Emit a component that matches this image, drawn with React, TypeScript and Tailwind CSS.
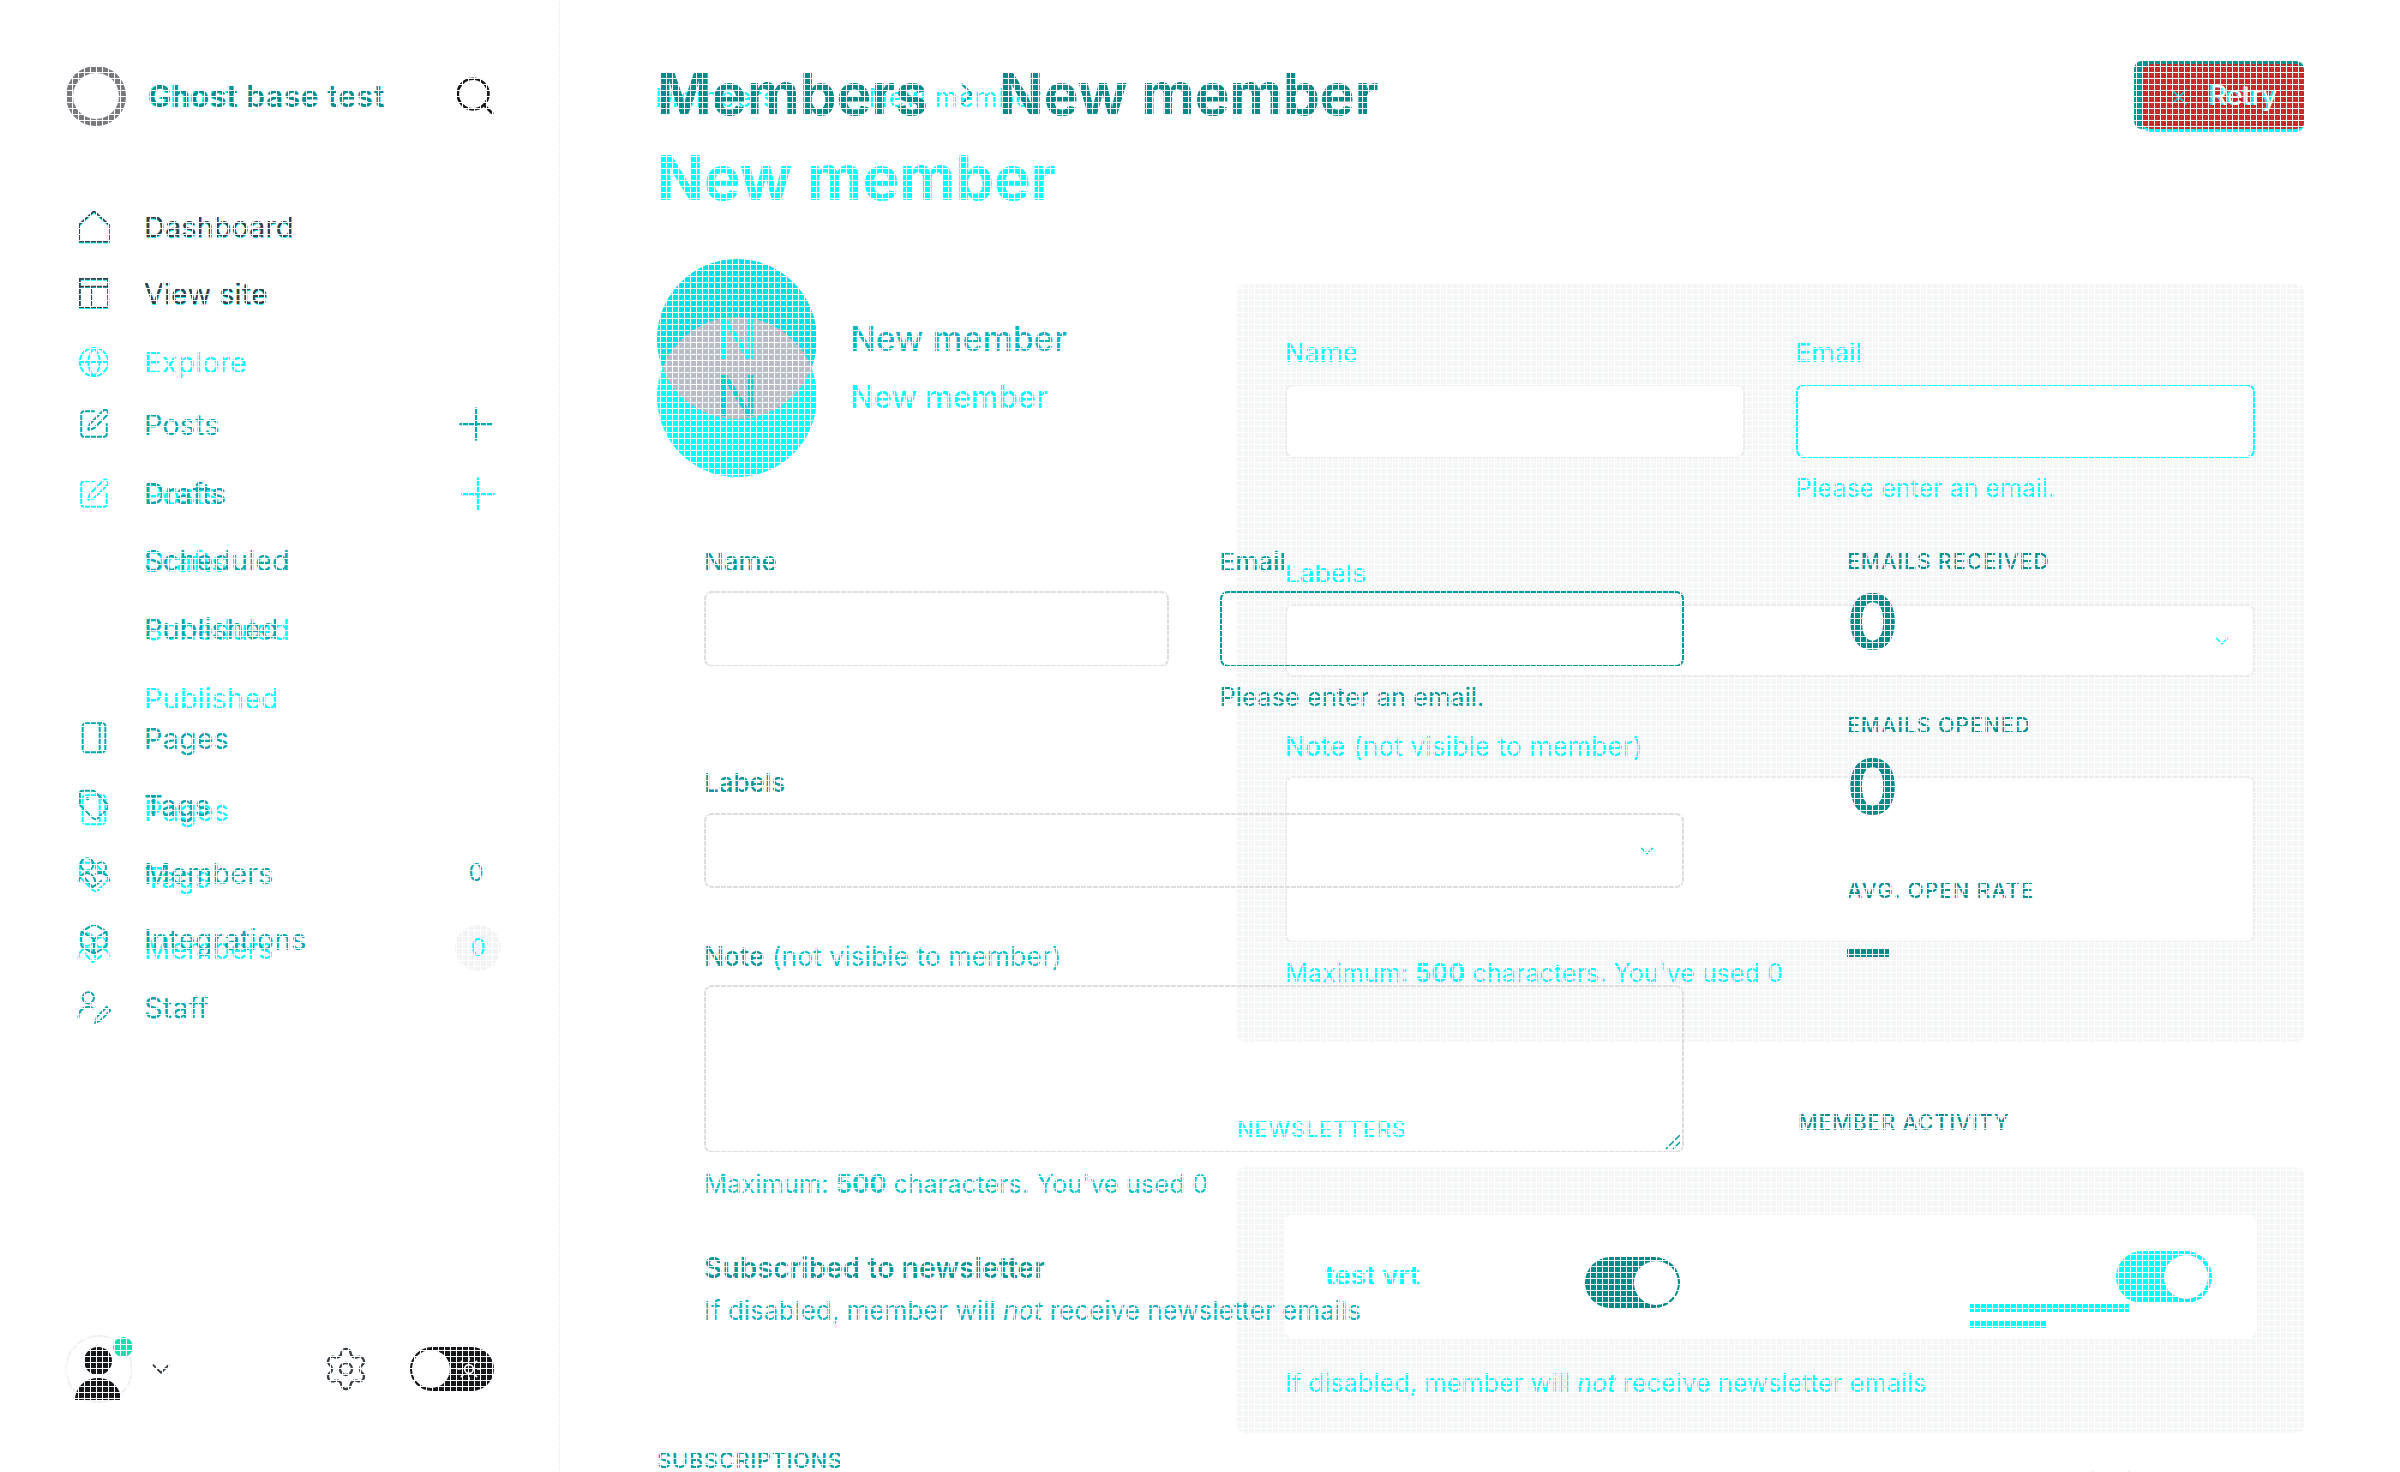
import { ReactNode } from "react";
import { Box, ChevronDown, ChevronRight, Globe, Plus, Search, Settings, SquarePen, Sun, Tag, X } from "lucide-react";

const iconClass = "w-[34px] h-[34px]";

const HomeIcon = () => (
  <svg viewBox="0 0 24 24" fill="none" stroke="currentColor" strokeWidth="1.3" className={iconClass}>
    <path d="M1.5 11 12 1.5 22.5 11v12h-21z" />
  </svg>
);

const SiteIcon = () => (
  <svg viewBox="0 0 24 24" fill="none" stroke="currentColor" strokeWidth="1.3" className={iconClass}>
    <path d="M2 2h20v20H2zM2 7.5h20M10 7.5V22" />
  </svg>
);

const PageIcon = () => (
  <svg viewBox="0 0 24 24" fill="none" stroke="currentColor" strokeWidth="1.4" className={iconClass}>
    <path d="M4 3.5c0-1 1-2 2-2h12c1 0 2 1 2 2V20c0 1-1 2-2 2H6c-1 0-2-1-2-2zM16 1.5V22" />
  </svg>
);

const MembersIcon = () => (
  <svg viewBox="0 0 24 24" fill="none" stroke="currentColor" strokeWidth="1.4" className={iconClass}>
    <circle cx="7" cy="6" r="4.5" />
    <circle cx="17" cy="8" r="3.5" />
    <path d="M1 19c0-4 3-7 6-7s6 3 6 7M13 13c3-2 9-1 10 5M5 15l6 7 7-5" />
  </svg>
);

const StaffIcon = () => (
  <svg viewBox="0 0 24 24" fill="none" stroke="currentColor" strokeWidth="1.4" className={iconClass}>
    <circle cx="8" cy="5.5" r="4" />
    <path d="M1 20c0-5 3-8 7-8 2 0 3 .5 4 1.500M13 23l1-4 7-7 2.500 2.500-7 7z" />
  </svg>
);

const NavRow = ({ icon, label, right, className }: { icon?: ReactNode; label: string; right?: ReactNode; className?: string }) => (
  <div className={`flex items-center h-[68px] ${className ?? ""}`}>
    <span className="w-[67px] shrink-0 flex items-center">{icon}</span>
    <span className="text-[29px] leading-none">{label}</span>
    {right && <span className="ml-auto w-[36px] flex justify-center text-[24px]">{right}</span>}
  </div>
);

const Field = ({ className }: { className?: string }) => (
  <div className={`rounded-lg border-2 ${className ?? ""}`} />
);

const NewLayer = () => (
  <div className="flex text-[#00ffff]">
    <aside className="w-[560px] h-[1472px] shrink-0 pl-[77px] pr-[64px] pt-[66px] flex flex-col">
      <div className="h-[60px] flex items-center pl-[70px] text-[30px] font-semibold tracking-[0.6px]">Ghost</div>
      <nav className="mt-[67px]">
        <NavRow icon={<HomeIcon />} label="Dashboard" />
        <NavRow icon={<SiteIcon />} label="View site" className="-mt-[1px]" />
        <NavRow icon={<Globe className={iconClass} strokeWidth={1.3} />} label="Explore" />
        <NavRow icon={<SquarePen className={iconClass} strokeWidth={1.4} />} label="Posts" right={<Plus className="w-[54px] h-[54px] shrink-0" strokeWidth={1} />} className="mt-[64px]" />
        <NavRow label="Drafts" className="-mt-[1px]" />
        <NavRow label="Scheduled" />
        <NavRow label="Published" className="mt-[1px]" />
        <NavRow icon={<PageIcon />} label="Pages" className="mt-[44px]" />
        <NavRow icon={<Tag className={iconClass} strokeWidth={1.4} />} label="Tags" className="-mt-[1px]" />
        <NavRow
          icon={<MembersIcon />}
          label="Members"
          right={<span className="w-[46px] h-[46px] shrink-0 rounded-full bg-[#f1f3f4] flex items-center justify-center">0</span>}
          className="mt-[3px]"
        />
      </nav>
    </aside>
    <main className="flex-1 pl-[97px] pr-[96px] pt-[83px]">
      <div className="text-[26px] leading-[30px] tracking-[0.9px] flex items-center -ml-[2px]">Members<span className="ml-[91px]">New member</span></div>
      <h1 className="mt-[30px] text-[61.500px] leading-[70px] font-bold">New member</h1>
      <div className="mt-[71px] flex">
        <div className="w-[580px] shrink-0 pl-[193px] pt-[98px] text-[31px] leading-[30px] font-medium">New member</div>
        <div className="flex-1">
          <section className="h-[758px] rounded-lg bg-[#f5f6f6] pl-[48px] pr-[49px] pt-[56px] text-[26px] leading-[26px] font-medium">
            <div className="grid grid-cols-2 gap-x-[51px]">
              <div>
                <div>Name</div>
                <Field className="mt-[18px] h-[74px] bg-white border-[#ececec]" />
              </div>
              <div>
                <div>Email</div>
                <Field className="mt-[18px] h-[74px] bg-white border-[#00ffff]" />
                <div className="mt-[20px] text-[25px] leading-[20px] font-normal">Please enter an email.</div>
              </div>
            </div>
            <div className="mt-[63px]">Labels</div>
            <div className="mt-[17px] h-[73px] rounded-lg border-2 border-[#ececec] bg-white flex items-center justify-end pr-[20px]">
              <ChevronDown className="w-[22px] h-[22px]" strokeWidth={1.5} />
            </div>
            <div className="mt-[56px] font-normal text-[26.500px]"><span className="font-medium">Note</span> (not visible to member)</div>
            <Field className="mt-[17px] h-[167px] bg-white border-[#ececec]" />
            <div className="mt-[20px] text-[25.200px] leading-[20px] font-normal">Maximum: <b className="font-bold">500</b> characters. You've used 0</div>
          </section>
          <div className="mt-[77px] text-[21.800px] leading-[20px] font-medium tracking-[0.8px]">NEWSLETTERS</div>
          <section className="mt-[28px] h-[266px] rounded-lg bg-[#f5f6f6] pl-[48px] pr-[48px] pt-[48px]">
            <div className="relative h-[123px] rounded-lg bg-white flex items-center justify-between pl-[40px] pr-[44px]">
              <span className="text-[27px] font-bold">test vrt</span>
              <span className="w-[96px] h-[52px] rounded-full bg-[#00ffff] flex items-center justify-end pr-[4px]">
                <span className="w-[44px] h-[44px] rounded-full bg-white shadow-sm" />
              </span>
              <span className="absolute left-[685px] top-[89px] w-[159px] h-[8px] bg-[#00ffff]" />
              <span className="absolute left-[685px] top-[106px] w-[77px] h-[7px] bg-[#00ffff]" />
            </div>
            <div className="mt-[35px] text-[25.400px] leading-[20px]">If disabled, member will <i>not</i> receive newsletter emails</div>
          </section>
        </div>
      </div>
    </main>
  </div>
);

const BaseLayer = () => (
  <div className="absolute inset-0 flex text-[#00a8ac]">
    <aside className="w-[560px] h-[1472px] shrink-0 border-r-2 border-[#f0f0f0] pl-[77px] pr-[64px] pt-[66px] pb-[70px] flex flex-col">
      <div className="h-[60px] flex items-center">
        <div className="w-[60px] h-[60px] -ml-[11px] rounded-full border-[7px] border-[#77797c]" />
        <div className="ml-[23px] text-[30px] font-semibold tracking-[0.6px] text-[#008f8f]">Ghost base test</div>
        <Search className="ml-auto w-[46px] h-[46px] -mr-[4px] text-[#15171a]" strokeWidth={1.4} />
      </div>
      <nav className="mt-[66px]">
        <NavRow icon={<HomeIcon />} label="Dashboard" className="text-[#394047]" />
        <NavRow icon={<SiteIcon />} label="View site" className="-mt-[1px] text-[#394047]" />
        <NavRow
          icon={<SquarePen className={iconClass} strokeWidth={1.4} />}
          label="Posts"
          right={<Plus className="w-[54px] h-[54px] shrink-0" strokeWidth={1} />}
          className="mt-[63px]"
        />
        <NavRow label="Drafts" className="mt-[1px]" />
        <NavRow label="Scheduled" className="-mt-[1px]" />
        <NavRow label="Published" />
        <NavRow icon={<PageIcon />} label="Pages" className="mt-[42px]" />
        <NavRow icon={<Tag className={iconClass} strokeWidth={1.4} />} label="Tags" className="-mt-[1px]" />
        <NavRow icon={<MembersIcon />} label="Members" right={<span>0</span>} />
        <NavRow icon={<Box className={iconClass} strokeWidth={1.4} />} label="Integrations" className="-mt-[2px]" />
        <NavRow icon={<StaffIcon />} label="Staff" />
      </nav>
      <div className="mt-auto flex items-center h-[68px] -ml-[12px] translate-y-[1px] text-[#394047]">
        <div className="relative w-[68px] h-[68px] rounded-full border-2 border-[#eeeeee] overflow-visible">
          <span className="absolute left-[17px] top-[10px] w-[28px] h-[28px] rounded-full bg-[#15171a]" />
          <span className="absolute left-[8px] top-[41px] w-[46px] h-[22px] rounded-t-full rounded-b-[14px] bg-[#15171a]" />
          <span className="absolute -right-[2px] top-0 w-[20px] h-[20px] rounded-full bg-[#14dfb0]" />
        </div>
        <ChevronDown className="ml-[13px] w-[30px] h-[30px]" strokeWidth={1.5} />
        <Settings className="ml-auto mr-[40px] w-[48px] h-[48px]" strokeWidth={1.2} />
        <div className="w-[84px] h-[44px] rounded-full bg-[#15171a] flex items-center pl-[2px]">
          <span className="w-[38px] h-[38px] rounded-full bg-white" />
          <Sun className="ml-[6px] w-[26px] h-[26px] text-white" strokeWidth={1.5} />
        </div>
      </div>
    </aside>
    <main className="flex-1 pl-[97px] pr-[96px] pt-[61px]">
      <header className="flex justify-between h-[68px]">
        <div className="flex items-center text-[58.500px] leading-[68px] font-bold text-[#008b8b] -translate-y-[1px]">
          <span>Members</span>
          <ChevronRight className="ml-[20px] w-[38px] h-[38px] text-[#00a0a0]" strokeWidth={1.5} />
          <span className="ml-[13px]">New member</span>
        </div>
        <div className="relative w-[170px] h-[68px] rounded-lg bg-[#009393]">
          <div className="absolute left-[9px] top-[3px] right-0 -bottom-[3px] rounded-lg bg-[#c52b2b] border-b-[3px] border-[#00ffff] flex items-center pl-[22px] text-[27px] text-white">
            <X className="w-[28px] h-[28px] text-[#00d8d8]" strokeWidth={1.5} />
            <span className="ml-[17px] [text-shadow:-2px_0_#00e8e8]">Retry</span>
          </div>
        </div>
      </header>
      <div className="mt-[130px] flex">
        <div className="relative w-[160px] h-[218px] shrink-0">
          <div className="absolute left-0 top-[58px] w-[160px] h-[160px] rounded-full bg-[#00ffff]" />
          <div className="absolute left-0 top-0 w-[160px] h-[160px] rounded-full bg-[#00e0e8] overflow-hidden">
            <div className="absolute left-0 top-[58px] w-[160px] h-[160px] rounded-full bg-[#b8bcc6]" />
            <div className="absolute inset-x-0 top-[52px] text-center text-[56px] leading-[56px] text-[#00ffff]">N</div>
            <div className="absolute inset-x-0 top-[109px] text-center text-[56px] leading-[56px] text-[#00d0d8]">N</div>
          </div>
        </div>
        <div className="ml-[33px] mt-[66px] text-[34px] leading-[28px] font-medium text-[#00b8c0]">New member</div>
      </div>
      <div className="mt-[72px] flex">
        <div className="w-[980px] ml-[47px] shrink-0 text-[#009a9a]">
          <div className="grid grid-cols-2 gap-x-[51px] text-[26px] leading-[26px] font-medium">
            <div>
              <div>Name</div>
              <Field className="mt-[16px] h-[76px] border-[#dedede]" />
            </div>
            <div>
              <div>Email</div>
              <Field className="mt-[16px] h-[76px] border-[#009a9a]" />
              <div className="mt-[20px] text-[25.500px] leading-[20px] font-normal">Please enter an email.</div>
            </div>
          </div>
          <div className="mt-[63px] text-[26px] leading-[26px] font-medium">Labels</div>
          <div className="mt-[17px] h-[75px] rounded-lg border-2 border-[#dedede] flex items-center justify-end pr-[24px]">
            <ChevronDown className="w-[22px] h-[22px] text-[#00d0d0]" strokeWidth={1.5} />
          </div>
          <div className="mt-[55px] text-[26.500px] leading-[26px]">
            <span className="font-medium">Note</span> <span className="text-[#00c4c8]">(not visible to member)</span>
          </div>
          <div className="relative mt-[16px] h-[168px] rounded-lg border-2 border-[#dedede]">
            <svg viewBox="0 0 16 16" className="absolute right-[1px] bottom-[1px] w-[16px] h-[16px] stroke-[#009a9a]">
              <path d="M1 15 15 1M8 15l7-7" strokeWidth="1.5" />
            </svg>
          </div>
          <div className="mt-[21px] text-[25.500px] leading-[20px] text-[#00c8c8]">
            Maximum: <b className="font-bold">500</b> characters. You've used 0
          </div>
          <div className="mt-[60px] flex justify-between pr-[4px]">
            <div>
              <div className="text-[28.300px] leading-[28px] font-semibold">Subscribed to newsletter</div>
              <div className="mt-[19px] text-[26px] leading-[20px] text-[#00b8c0]">If disabled, member will <i>not</i> receive newsletter emails</div>
            </div>
            <span className="mt-[3px] w-[95px] h-[51px] rounded-full bg-[#008b8b] flex items-center justify-end pr-[2px]">
              <span className="w-[44px] h-[44px] rounded-full bg-white" />
            </span>
          </div>
          <div className="mt-[129px] -ml-[47px] text-[22px] leading-[20px] font-medium tracking-[0.6px] text-[#00a0a4]">SUBSCRIPTIONS</div>
        </div>
        <div className="ml-[163px] pt-[2px] text-[#009090]">
          <div className="text-[21.500px] leading-[20px] font-medium tracking-[0.8px]">EMAILS RECEIVED</div>
          <div className="mt-[10px] text-[76px] leading-[80px] font-bold text-[#008b8b]">0</div>
          <div className="mt-[54px] text-[21.500px] leading-[20px] font-medium tracking-[0.8px]">EMAILS OPENED</div>
          <div className="mt-[11px] text-[76px] leading-[80px] font-bold text-[#008b8b]">0</div>
          <div className="mt-[54px] text-[21.500px] leading-[20px] font-medium tracking-[0.8px]">AVG. OPEN RATE</div>
          <div className="mt-[49px] w-[42px] h-[8px] bg-[#008b8b]" />
          <div className="mt-[155px] -ml-[49px] text-[21.500px] leading-[20px] font-medium tracking-[0.8px]">MEMBER ACTIVITY</div>
          <div className="mt-[337px] ml-[80px] text-[30px] leading-[30px] text-[#00a8ac]">Add subscription</div>
        </div>
      </div>
    </main>
  </div>
);

export default function App() {
  return (
    <div className="relative w-[2400px] h-[1472px] overflow-hidden bg-white font-[Inter,sans-serif]">
      <NewLayer />
      <BaseLayer />
      <div className="absolute inset-0 pointer-events-none bg-[linear-gradient(to_right,#fff_1px,transparent_1px),linear-gradient(to_bottom,#fff_1px,transparent_1px)] bg-[size:6px_6px]" />
    </div>
  );
}
